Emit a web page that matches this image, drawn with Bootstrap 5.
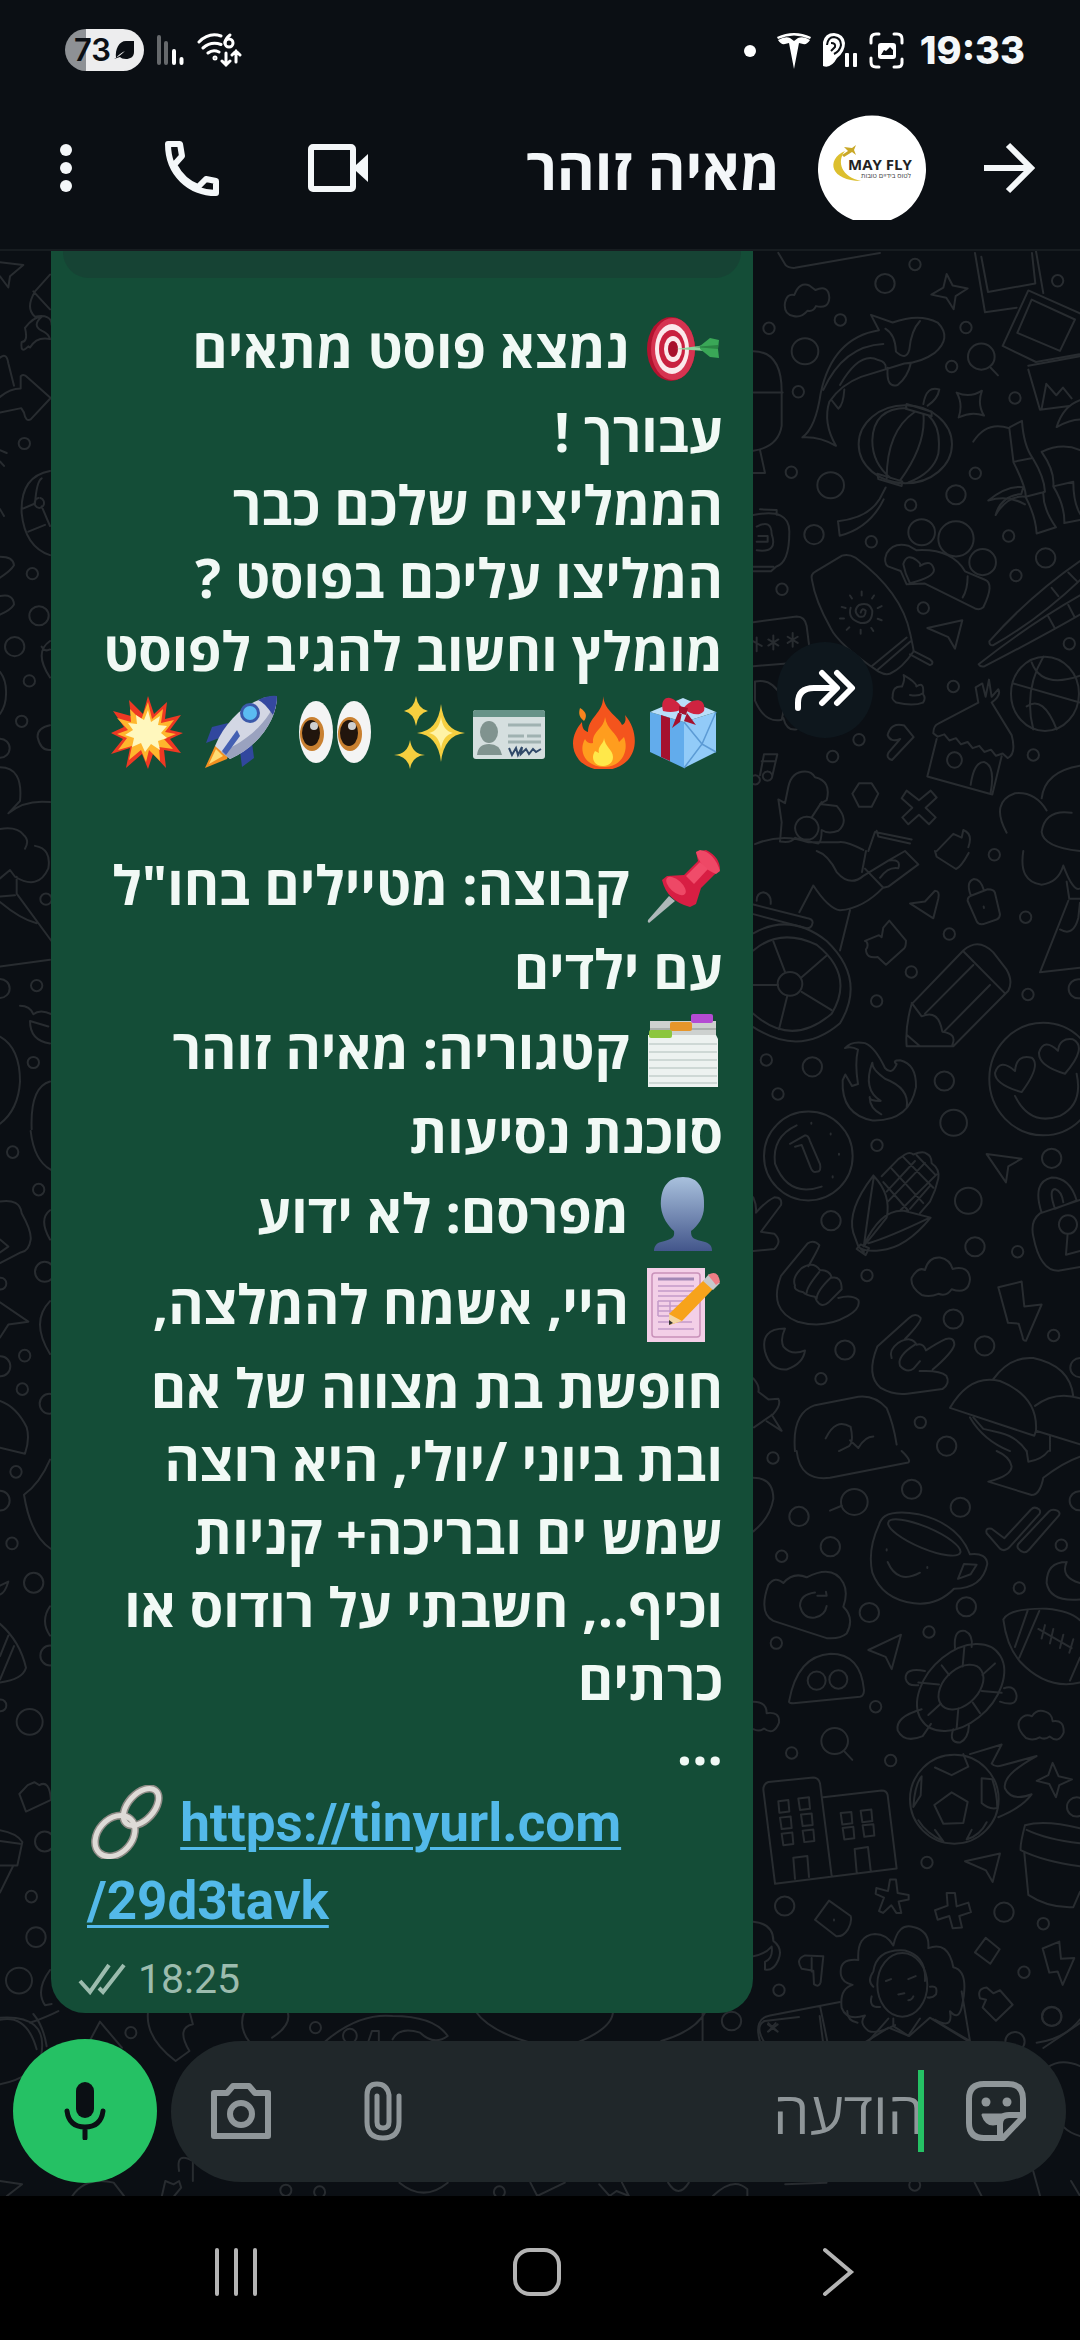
<!DOCTYPE html>
<html lang="he">
<head>
<meta charset="utf-8">
<meta name="viewport" content="width=device-width, initial-scale=1">
<title>מאיה זוהר</title>
<link href="https://cdn.jsdelivr.net/npm/bootstrap@5.3.0/dist/css/bootstrap.min.css" rel="stylesheet">
<style>
body{background:#0b0f14;color:#f4f7f9;font-family:"Open Sans","Noto Sans",sans-serif}
svg{display:block;flex:none}
.sys-bar{height:100px;padding:0 55px 0 65px}
.sys-icons{gap:12px}
.sys-time{font:800 38px/56px Inter,sans-serif}
.batt{width:79px;height:42px;border-radius:21px;background:linear-gradient(90deg,#8e9195 21px,#ededee 21px);color:#0b0f14;font:600 31px/42px Inter,sans-serif;padding-left:9px}
.chat-head{height:151px;border-bottom:2px solid #171c20;padding:0 44px 14px 56px}
.icon-btn{background:none;border:0;padding:0;color:#f4f7f9}
.contact{font-size:58px;font-weight:700;line-height:80px;gap:38px}
.avatar{width:108px;height:108px;margin-right:16px}
.head-actions{gap:89px}
.chat-area{background:#0b0f14}
.doodle{left:0;top:0;width:1080px;height:1946px}
.doodle-lines{fill:none;stroke:#282c30;stroke-linecap:round;stroke-linejoin:round}
.doodle path,.doodle ellipse{vector-effect:non-scaling-stroke;stroke-width:2px}
.msg-row{padding-left:51px;gap:24px}
.bubble{width:702px;background:#144d37;border-radius:0 0 34px 34px;color:#f1f9f5}
.preview-end{height:27px;margin:0 12px;background:#164334;border-radius:0 0 26px 26px}
.msg-body{padding:26px 30px 0 36px;font-size:54px;font-weight:700}
.ln{line-height:73px;white-space:nowrap}
.ln-emoji{padding:7px 0 11px}
.ln-empty{height:63px}
.ln-dots{height:68px;line-height:56px}
.emo{display:inline-block;width:74px;height:74px;margin:-10px 3px;vertical-align:-8px}
.ln-link{line-height:78px;font-family:Roboto,sans-serif;font-size:53px}
.ln-link a{color:#53b9e9;text-decoration-thickness:3px;text-underline-offset:6px}
.msg-meta{padding:14px 27px 9px;gap:12px;color:#9cbcae;font:400 41px/50px Roboto,sans-serif}
.fwd{width:96px;height:96px;border-radius:50%;background:#0e171d;margin-top:391px;border:0;padding:0}
.composer{padding:0 14px 13px 13px;gap:14px}
.mic{width:144px;height:144px;border-radius:50%;background:#25c164;border:0;padding:0}
.pill{min-height:141px;border-radius:71px;background:#20272a;padding:0 40px;color:#8f9699}
.pill .icon-btn{color:#8f9699}
.pill-tools{gap:92px}
.field{margin:0 42px}
.msg-input{background:none;border:0;outline:0;color:#f4f7f9;font-size:58px;height:82px;padding:0;min-width:0;caret-color:#25c164}
.msg-input::placeholder{color:#8f9699;opacity:1}
.caret{width:6px;height:82px;background:#25c164;right:0;top:0}
.nav-keys{height:144px;background:#000;padding:8px 6px 0 0}
.nav-keys .icon-btn{color:#b4b4b4;width:28%}
</style>
<script src="https://cdn.jsdelivr.net/npm/bootstrap@5.3.0/dist/js/bootstrap.bundle.min.js"></script>
</head>
<body>
<div class="d-flex flex-column min-vh-100">

<div class="sys-bar d-flex align-items-center justify-content-between">
  <div class="sys-icons d-flex align-items-center">
    <div class="batt d-flex align-items-center">73<svg width="24" height="22" viewBox="0 0 24 22"><path d="M23 2v11c0 5-4 7-8 7-3 0-5-1-6-2l-6 2c4-2 8-5 11-8-4 2-7 4-9 7-1-9 3-17 10-17z" fill="#0b0f14"/></svg></div>
    <svg width="28" height="32" viewBox="0 0 28 32" stroke-width="4" stroke-linecap="round"><path d="M3 3v26M10 9v20" stroke="#66696c"/><path d="M18 17v12M25.500 25v4" stroke="#fff"/></svg>
    <svg width="46" height="38" viewBox="0 0 46 38" fill="none" stroke="#fff" stroke-width="3" stroke-linecap="round"><path d="M3 11q10-10 22-6M7 17q8-7 18-3.500M12 22q5-4 11-1"/><circle cx="19" cy="27" r="1"/><path d="M34 4q-5 4-5 8"/><circle cx="33" cy="12" r="4"/><path d="M30 22v12m-4-4l4 4 4-4M40 31V20m-4 4l4-4 4 4"/></svg>
  </div>
  <div class="d-flex align-items-center">
    <svg width="176" height="44" viewBox="0 0 176 44" fill="#fff"><circle cx="6" cy="23" r="6"/><path d="M33 9q17-8 34 0l-1 2q-16-7-32 0zM34 12q7-4 12-2l4 3 4-3q6-2 12 2-3 5-7 4l-4-1-5 26-5-26-4 1q-4 1-7-4z"/><path d="M79 14q2-9 11-9 10 1 11 10 0 9-8 15-6 11-14 8z"/><path d="M83 17q1-8 7-8 7 1 7 8-1 6-7 9M87 15q5 0 4 4l-4 4" fill="none" stroke="#0b0f14" stroke-width="2"/><rect x="101" y="25" width="4" height="14" rx="1"/><rect x="109" y="25" width="4" height="14" rx="1"/><path d="M127 15v-4q0-5 5-5h3M150 6h3q5 0 5 5v4M158 31v4q0 4-5 4h-3M135 39h-3q-5 0-5-5v-4" fill="none" stroke="#fff" stroke-width="3" stroke-linecap="round"/><path d="M137 15h12q3 0 3 3v10q0 3-3 3h-12q-3 0-3-3V18q0-3 3-3zm0 12h12v-5l-3-3-4 4-2-1z" fill-rule="evenodd"/></svg>
    <div class="sys-time">19:33</div>
  </div>
</div>

<header class="chat-head d-flex align-items-center justify-content-between" dir="rtl">
  <div class="contact d-flex align-items-center">
    <button class="icon-btn" aria-label="חזרה"><svg width="56" height="56" viewBox="0 0 56 56" fill="none" stroke="currentColor" stroke-width="6"><path d="M4 28h46M28 5l23 23-23 23"/></svg></button>
    <svg class="avatar" viewBox="0 0 108 108"><path d="M35 106a54 54 0 1 1 38 0z" fill="#fff"/><path d="M27 37c-20 9-14 30 16 30-19-4-25-19-16-30z" fill="#dcbf2e"/><path d="M24 41l6-4-4-4 8 1 4-3-2 5 2 5-4-3-8 5z" fill="#c9a827"/><text x="30" y="56" font-family="Open Sans" font-size="15" font-weight="700" fill="#222" direction="ltr">MAY FLY</text><text x="93" y="64" font-family="Open Sans" font-size="7" font-weight="400" fill="#444" direction="rtl">לטוס בידיים טובות</text></svg>
    <span>מאיה זוהר</span>
  </div>
  <div class="head-actions d-flex align-items-center">
    <button class="icon-btn" aria-label="שיחת וידאו"><svg width="60" height="56" viewBox="0 0 60 56"><rect x="3" y="7" width="42" height="42" rx="2" fill="none" stroke="currentColor" stroke-width="6"/><path d="M48 25l12-11v28L48 31z" fill="currentColor"/></svg></button>
    <button class="icon-btn" aria-label="שיחה"><svg width="54" height="56" viewBox="0 0 54 56" fill="none" stroke="currentColor" stroke-width="6" stroke-linejoin="round"><path d="M3 4h12l2 12-8 9Q18 42 33 47l8-8 10 2v12C25 53 3 34 3 4z"/></svg></button>
    <button class="icon-btn" aria-label="עוד"><svg width="20" height="56" viewBox="0 0 20 56" fill="currentColor"><circle cx="10" cy="10" r="6"/><circle cx="10" cy="28" r="6"/><circle cx="10" cy="46" r="6"/></svg></button>
  </div>
</header>

<main class="chat-area position-relative overflow-hidden flex-grow-1 d-flex flex-column justify-content-between">
  <svg class="doodle position-absolute" viewBox="0 250 1080 1946" aria-hidden="true">
    <defs>
      <ellipse id="rs" rx="17" ry="15"/><ellipse id="rm" rx="29" ry="25"/><ellipse id="rl" rx="40" ry="34"/>
      <ellipse id="ls" rx="17" ry="10"/><ellipse id="lm" rx="29" ry="17"/>
      <path id="arrow" d="M0 0l105-20-22 74-20-30z"/>
    </defs>
    <g class="doodle-lines" transform="translate(740 250) scale(.3333 .3827)">
      <use href="#rs" x="525" y="35"/><use href="#rs" x="87" y="202"/><use href="#rs" x="301" y="180"/><use href="#rs" x="175" y="368"/><use href="#rs" x="678" y="200"/><use href="#rs" x="635" y="302"/><use href="#rs" x="825" y="384"/><use href="#rs" x="953" y="78"/><use href="#rs" x="154" y="578"/><use href="#rs" x="512" y="664"/><use href="#rs" x="706" y="581"/><use href="#rs" x="394" y="760"/><use href="#rs" x="806" y="745"/><use href="#rs" x="828" y="848"/><use href="#rs" x="126" y="884"/><use href="#rs" x="550" y="933"/><use href="#rs" x="640" y="1138"/><use href="#rs" x="988" y="1026"/><use href="#rs" x="357" y="1277"/><use href="#rs" x="278" y="1321"/><use href="#rs" x="880" y="1317"/>
      <use href="#rm" x="435" y="85"/><use href="#rm" x="648" y="637"/><use href="#rm" x="222" y="741"/><use href="#rm" x="917" y="802"/><use href="#rl" x="195" y="262"/><use href="#rl" x="272" y="612"/><use href="#rl" x="545" y="735"/><ellipse cx="648" cy="752" rx="53" ry="46"/><use href="#rl" x="728" y="813"/><use href="#rl" x="724" y="276"/><path d="M752 305l22 20"/>
      <path d="M115 5l22 32q8 8 28 7L420 5M160 170q-30-5-25-35 6-25 28-20 15-35 45-25l18 12q40-15 42 20-2 30-40 22-8 15-25 12-20 20-43 14zM620 60l18 30 45 8-36 20-6 34-22-30-45-8 36-18zM650 370q40 15 76-5-15 35 6 65-38-12-76 5 14-35-6-65z"/>
      <path d="M705 5l30 155 95-12M724 15l20 92 142-22-10-80M888 0l22 110M865 103l155 60M865 103l-77 145 100 42 130-20M875 127l130 52-45 82-128-47zM865 300l155-25M865 310l35 105 88-10M905 412l14-65 30 30 20-20 26 28M1020 390q-50 15-70 70 40-20 70-20"/>
      <path d="M187 487q40-25 55-115 35-145 175-165l-24-40 65 20q80-25 135 0 45 40-10 80-40 25-90 27l-130 35q-60 20-95 65-20 55 20 115-50-25-101-22zM430 243q-120 5-180 120M436 203q30 15 32 60 30 25 40-5 5-50 32-75M443 305q-5 55 30 45 30-20 40-58M300 350q60-90 115-65 25 5 22 22M275 390l20 22q15-10 18-50"/>
      <ellipse cx="496" cy="505" rx="140" ry="102"/><path d="M500 410q-100 0-103 85 0 60 55 98M525 420q-85 50-85 175M550 425q10 80-70 175M565 430q40 30 30 100-15 50-90 75M500 400l75 20v12l-78-20zM550 400q10-50 48-38-5 25-35 42M412 582l75 20-2 12-70-18zM437 618l-18 30q-35 50-125 58l5 38q90-20 132-95"/>
      <path d="M700 498q40-55 108-35l12 85M810 460l36-16q5 65 32 97l-58 10q40 70 37 92 30 50 33 95l58-16q-40-50-38-92M878 541q35 50 37 88l-58 13q-55-5-90 48 15-50 77-55l6-18q-50-5-105 35 60-15 110 10M905 525q60-25 115-5M905 525q40 50 35 90l60-12M940 615q35 50 33 96l47-8M1000 603q0 60 25 90"/>
      <path d="M40 262q85 0 85 105v90q-10 55-85 65M40 370h88M60 520l15 60H40M40 690q110-20 108 45 0 80-40 90l-15 12H40M40 825h60M60 675l50 2v12M50 720q45-20 45 20 20 50-45 42M55 745h28v15H50"/>
      <path d="M216 860q-5-15 10-22l80-42q20-5 40 5 140 90 165 200 10 40 10 45-35 45-70 58-15 5-35-5-120-70-145-115-45-70-55-124zM395 1085l105-75M412 1095l100-75M520 1045l50 22q15 10 0 15l-60-28"/>
      <path d="M362 945q5-15 15-5 0 20-20 15-20-15 0-30 30-10 40 15 0 35-35 32-40-10-30-40M365 890v10M330 900l6 8M305 930l12 3M300 960h12M320 990l8-7M362 1000v-10M400 993l-6-8M425 965l-12-4M425 928l-12 5M402 900l-6 8"/>
      <path d="M440 790q20-30 65-20l25 12q105-5 145 55l60 22q30 10-5 72-10 8-25 3l-150-65-55 2-18-35-38-12q-15-10-4-34zM510 868q-15-25-20-50 10-30 40-10 15 10 10 15 35-20 42 10 0 20-72 35zM683 850q0 35-15 55"/>
      <use href="#arrow" x="562" y="985"/><path d="M1020 810Q870 900 748 1020q0 12 12 10Q900 960 1020 860M935 880l20 22M985 840l25 22M1020 900Q860 980 716 1080q5 8 18 5Q900 1010 1020 950M985 925l18 30M925 955l18 28"/>
      <ellipse cx="915" cy="1157" rx="102" ry="97"/><path d="M820 1130l200 50M875 1075q30 70 145 35M910 1060q-60 90-30 190M860 1190q50-30 90 60"/>
      <path d="M40 970l130-15q25 0 30 25l8 55q0 35-30 40L40 1085M100 1005v36M85 1015l30 16M115 1015l-30 16M158 998v36M143 1008l30 16M173 1008l-30 16M50 1010v36M40 1020l25 12M45 1125q50-10 80 40 10 30 0 60-50 10-80-50zM125 1150q130-40 240-20 20 40-20 55-40 10-50-2M130 1220q10 35 40 30M200 1250l35-45 30 45z"/>
      <path d="M458 1165q0-30 28-27 10-20 5-30 40 20 38 30 25-15 20 20 10 10 0 22-30 10-80 0-15-10-11-15zM510 1160q25 5 40-5M443 1265q10-35 50-25l28 30-65 60q-20-5-10-20l35-35q-30 10-38-10z"/>
      <path d="M580 1260q0-20 15-25l120-55-8-40 20-10 10 35 10-45 8 45 20-20q10 15-20 35l60 85q15 50-12 60l-15-12-20 6-15-16-20 6-15-16-20 6-15-16-20 6-15-16-20 6-15-16-20 6zM590 1275l-28 98 195 47 28-100M692 1395q10-60 40-60 35 10 20 80M643 1310a22 20 0 1 0 1 0"/>
      <path d="M60 1370l12-55h40l-16 60M65 1333h40M45 1370a14 12 0 1 0 1 0M82 1360a14 12 0 1 0 1 0M337 1418l20-27h38l20 27-20 34h-38zM500 1410l37 25 35-25 18 18-33 27 30 25-20 18-30-25-32 25-18-18 30-25-32-25zM145 1400q10-40 50-40 20 0 30 15 50 10 35 60l-20 10 50 5q40 40 5 65-30 10-50-2 0 30-10 35-60-10-70-15-10 15-45 10l5-50-10-60 20 10zM200 1478a35 30 0 1 0 1 0M215 1480l30-40M800 1520q-50-80 25-103 60-5 95 45M905 1430q10-70 115-85M1020 1568q-110-10-115-50 10-60 90-50M45 1550q80-30 160-5h90q20-5 75 20M385 1568l20-50 110 20M410 1515l5 15 95 18M590 1568l50-45 25 10 5-20q30 10 15 45"/>
    </g>
    <g class="doodle-lines" transform="translate(740 850) scale(.3333 .3827)">
      <use href="#rs" x="763" y="10"/><use href="#rs" x="857" y="173"/><use href="#rs" x="628" y="217"/><use href="#rs" x="514" y="316"/><use href="#rs" x="410" y="392"/><use href="#rs" x="864" y="375"/><use href="#rs" x="79" y="546"/><use href="#rs" x="114" y="635"/><use href="#rs" x="411" y="769"/><use href="#rs" x="833" y="1047"/><use href="#rs" x="381" y="1109"/><use href="#rs" x="941" y="1266"/><use href="#rs" x="243" y="1379"/><use href="#rs" x="541" y="1493"/>
      <use href="#rm" x="217" y="564"/><use href="#rm" x="613" y="601"/><use href="#rm" x="935" y="803"/><use href="#rm" x="273" y="966"/><use href="#rm" x="705" y="1034"/><use href="#rm" x="640" y="1223"/><use href="#rm" x="315" y="1304"/><use href="#rm" x="734" y="1293"/><use href="#rm" x="620" y="1555"/><use href="#rl" x="641" y="710"/><use href="#rl" x="685" y="914"/><use href="#rm" x="1015" y="360"/><use href="#rm" x="1020" y="1350"/>
      <path d="M230 0q35 10 60 55 40 40 80 10l75-40 50-25 40 35-90 58-15 3-55-50M378 0l-12 55M445 25q40-5 30 20-30-5-55 25M430 95q-60 55-130 60-35-5-80-65l-42 70M330 155l-30 105M40 165l160 37q15 0 18-15 0-10-18-12L40 140M50 130q0-20 20-22 25 5 22 30"/>
      <path d="M40 215q110-55 220 20 120 100 40 215-120 90-260 10M40 260q80-60 190-15 115 80 45 180-120 90-235 0"/><ellipse cx="150" cy="347" rx="37" ry="31"/><path d="M135 316l-35-80M185 330l75-57M185 368l90 48M142 378l-25 88M40 350h74"/>
      <path d="M585 0l5 15 58 32q15-5 38-42M510 137l45-5 30-28q15 0 10 20l-15 52zM375 235l42-15 8 5 5-25 18-18 50 52q0 15-5 20l-55 43-25-20q-35 5-35-20 10-10 0-22zM683 130q0-10 10-13l50-17q20 0 22 10l15 55q0 10-10 14l-40 12q-15 2-20-8zM692 115q-15-35 10-42 20 0 30 30M731 145l1 4"/>
      <path d="M515 400l155-140q45-35 90 5l40 45q20 30 5 55L640 510H500q-5-50 15-110zM670 262l125 110M700 298L555 425M750 350L612 472M515 397l30 35q50-20 62 40 45 5 30 35M500 480l40 30"/>
      <path d="M850 0q-15 80 55 88 50-5 65-50 30 70 50 60M980 80l8 45h32M985 130l-85 187 120-12M960 205q40 20 55-30l5-40"/>
      <path d="M315 515q20-20 60-13 30 10 60 65 20 20 35-10-15-10 10-10 50 10 48 70-20 90-130 87-95-15-90-105l8-15 20 30 18-5q-10-55 0-90-20-10-39-4zM500 670q10-50-65-75-40-25-38-42-30 70 25 100-35 0-33-10 0 30 35 45"/>
      <ellipse cx="910" cy="596" rx="162" ry="147"/><path d="M845 630q-80-20-80-50 15-40 60-5 5-45 50-35 30 20-30 90zM975 582q-80-20-78-55 15-40 57-5 5-35 45-30 45 20-24 90zM825 640q45 80 135 52 70-30 50-110"/>
      <ellipse cx="205" cy="797" rx="133" ry="116"/><path d="M170 717q-75 30-65 100 40 90 140 60M150 765l45-22q10 0 15 15l30 60q5 20-10 20-12 5-20-15l-25-55-20 5M214 710v3M272 738v3M297 791v3M278 850v3"/>
      <path d="M425 850l50-45 20-12q15-8 25 0 30-10 40-2 15 5 15 25 25 15 20 40l-10 30-15 30-30 30M400 848q55 50 40 110-45 50-70 75M400 848q-80 90-60 150l15 35 17 15M372 1030q20-130 30-180M372 1030q50-95 120-90l80 18q-75 80-150 85-40 5-60-5M385 1025q60-15 180-65M350 1040l12-12 25 10-10 18zM430 865l75 75M455 830l95 90M490 800l90 80M530 795l55 50M445 915l110-100M480 940l110-95M440 890l85-80M510 935l60-60"/>
      <path d="M740 792l105 12-40 20-7 42zM545 1160q-35-20-30-45 20-30 40-20 10-35 45-33 30 5 38 30 50-10 52 28-5 40-55 25-15 20-40 12-25 10-50 3zM775 1140l70-15 8 65 52-5-47 95q-10 0-10-10l-12-35-32-2z"/>
      <path d="M905 945q-30-80 30-92 55 0 75 60l-65 22q-20-50 0-52 20 5 25 35M1020 912l-120 35q-30 20-20 60 20 90 75 90l65-10M985 1000a27 24 0 1 0-2 0l-5 55 42-10"/>
      <path d="M205 1085q30-45 33-55-15-15-35-5l-80 85q-40 90 50 120 80 20 150-15 40-20 32-42-20-15-60-5M165 1135q-10-20 20-45 35-20 55 5 30 0 35 20 30-5 30 30l-40 35q-20 15-35-5l-5-10q-30-5-35-12-30-5-25-18zM200 1155q0-15 38-55M230 1170q0-20 42-55"/>
      <path d="M495 1275q50-45 47-55-15-15-35 0l-95 75q-35 75 10 108 40 20 80 15l105-12q25-15 12-35-20-15-80-12M455 1325q-10-20 20-40 40-20 55 5 20-5 28 15 35-20 60-30 25-5 25 15-5 20-65 65M480 1345q-10-25 45-55M480 1345q20 20 40 8l20-20"/>
      <path d="M135 1248q-75 0-60 60 15 50 65 47 50-15 55-50-40 15-65-10-10-20 5-47zM40 905q10 20 8 40 30-30 55-40 25 0 20 20l-60 70 40 5q25 20 0 40l-63 5M40 1378q20 20 15 35l30 20 30-2q10 15-15 40l-58 35M80 1490l45 25-30-42M165 1568q-10-100 60-120l130-22q50-5 85 30 20 40 30 95M257 1535q30-55 75-30 10 40-5 50l-30 13M330 1540l25 20q20-30 45-30M630 1455q60-90 150-70 115 40 108 130l-5 13zM760 1380q50-60 120-55 110 20 120 100M885 1450q60-40 135-20M690 1480q40 60 120 88M700 1480l30 30 50 10q50 10 80 48M888 1515l132 35M930 1530v38"/>
    </g>
    <g class="doodle-lines" transform="translate(740 1450) scale(.3333 .3827)">
      <use href="#rs" x="99" y="18"/><use href="#rs" x="125" y="275"/><use href="#rs" x="109" y="502"/><use href="#rs" x="964" y="246"/><use href="#rs" x="838" y="358"/><use href="#rs" x="567" y="473"/><use href="#rs" x="407" y="668"/><use href="#rs" x="155" y="789"/><use href="#rs" x="452" y="809"/><use href="#rs" x="561" y="1075"/><use href="#rs" x="910" y="1235"/><use href="#rs" x="852" y="1362"/><use href="#rs" x="117" y="1409"/>
      <use href="#rm" x="515" y="100"/><use href="#rm" x="661" y="147"/><use href="#rm" x="177" y="171"/><use href="#rm" x="271" y="250"/><use href="#rm" x="388" y="422"/><use href="#rm" x="679" y="407"/><use href="#rm" x="134" y="1189"/><use href="#rm" x="792" y="1205"/><use href="#rm" x="935" y="1477"/><use href="#rm" x="825" y="1543"/><use href="#rm" x="1010" y="930"/><use href="#rm" x="1018" y="130"/><use href="#rl" x="343" y="133"/><path d="M305 143l-35 13"/><use href="#rl" x="284" y="758"/><path d="M313 785l24 22"/>
      <path d="M170 0q10 80 100 70l235-40q10-5-20-30M40 70q60 0 60 55-10 50-60 85M770 0q40 15 45 40 0 25-70 40l130 35q25 0 35-45 60-40 110-55M860 0l5 28q40-5 60-28"/>
      <path d="M435 170q30-15 100-5 120 25 155 105 50-5 52 25-15 65-100 65-50 45-120 38-95-10-125-80-15-60 20-125 5-15 18-23z"/><ellipse cx="553" cy="226" rx="115" ry="28" transform="rotate(20 553 226)"/><path d="M443 290q30 60 97 28M672 295l38 2-18 25-38 12zM440 257v3M562 303v3"/>
      <path d="M740 215q-5-15 15-12l38 25 80-75q10-10 25 0 5 5 0 12l-88 85q-15 15-30 5zM835 255q-5-5 0-12l92-85q10-8 25-2 10 5 5 12l-90 90q-15 15-32-3zM980 290q-60 0-60 55 10 50 100 43M980 290q-20 40 40 55"/>
      <path d="M85 350q20-25 45-5 30-30 70-15 80-35 110 15 15 25 0 62 35 30 10 70-20 15-60 12l-160-45q-45-20-15-94zM225 370q-45 5-45 35 10 35 45 30 30-5 35-30M232 378h28l-2-10M385 520l98-40-28 90-18-32zM147 655q25-120 125-125 90 0 100 95 0 15-12 17l-200 17q-12 0-13-4z"/><ellipse cx="230" cy="600" rx="27" ry="24"/><ellipse cx="295" cy="597" rx="27" ry="24"/>
      <path d="M790 440q20-30 130-28 70 5 100 30M790 440q10 70 50 110 80 75 180 55M825 512l38-95M838 540l60-122M990 600l30-60M895 465l100 50M915 455l-10 35M940 465l-10 38M970 480l-10 35M1000 492l-12 35"/>
      <ellipse cx="662" cy="618" rx="145" ry="95" transform="rotate(-35 662 618)"/><ellipse cx="663" cy="617" rx="75" ry="48" transform="rotate(-35 663 617)"/><path d="M645 515q-5-50 30-45 25 10 20 42M555 575q-60-10-58 20 5 20 38 17M545 675q-80 20-72 55 20 35 75 15l25-32M640 727q-15 35 20 35 25-10 27-45M780 655q50 15 50-15-5-30-38-20M605 560l22 25M673 513l-5 50M765 555l-38 30M785 632l-60-5M720 685l-22-28M650 725l5-52M565 690l38-30M535 605l62 5"/>
      <path d="M858 750q-30-25-20-45 15-20 38-12 15-20 40-12 20 5 22 25 35-5 33 30-15 30-42 10-15 10-30 2-20 10-41 2zM40 655q40 0 40 30 40-5 37 25-15 35-45 15-15 10-32 2"/>
      <ellipse cx="643" cy="910" rx="133" ry="116"/><path d="M583 925l52-33 48 25-13 55-60 2zM585 827l50 20 50-22-15-33M545 850q-20 20-25 80l22-30zM725 920v-65l32 3q15 40 15 75-25 5-47-13zM535 965q25 35 75 55l-25-30M740 970q-20 35-60 45l15-25M690 792l95-25-30 50q10 10 30 5l105-25q-105 50-95 85 20 35 80 15-30 35-100 60M938 815l18 35 40 8-38 15-10 32-20-35-38-8 35-15z"/>
      <path d="M105 1130L70 885q0-15 15-20l135-12q15 0 20 15l35 242M250 905l175-18q15 0 18 12l27 192-365 40M165 1118l-5-55 42-5 5 55M350 1100l-6-60 40-5 8 60M115 915l30-3 3 30-30 3zM175 908l32-3 3 30-30 3zM120 958l32-3 3 30-30 3zM183 950l32-3 3 30-30 3zM125 1000l32-3 3 30-30 3zM188 992l32-3 3 30-30 3zM302 946l32-3 3 30-30 3zM362 940l32-3 3 30-30 3zM308 985l32-3 3 30-30 3zM368 978l32-3 3 30-30 3z"/>
      <path d="M855 978q60-15 165 8M855 978q-15 50-13 65 70 30 178 42M860 990q60 25 160 35M853 1050l12 110q60 35 135 32l20-40"/><use href="#arrow" x="675" y="1072"/>
      <path d="M450 1120h18l5 35 33 5v12l-30 5 8 30h-15l-15-20-25 20-12-5 15-35-25-10 2-15 35 8zM620 1155h25l5 35 35-10 8 25-35 10 8 30-28 2-10-32-35 10-8-25 38-12zM225 1225l42-50 65 40q5 15-8 35-15 20-35 18zM282 1224v3M705 1310l32-38 42 30-28 38zM720 1430q-10-25 20-28l20 15 20-8 38 38-50 42-40-35 10-20zM908 1300l50-18 5 45 40-2-35 70-15-35-25 3zM250 1320l-55-2q-30 10-10 35l35 5 2 35q15 10 20-5zM215 1325v35M40 1230q60 5 60 50 30 20 15 50-15 30-40 25v-20q25-10 20-40-20 20-55 25"/>
      <path d="M355 1330q-5-65 50-68 35 0 55 30 15-60 60-48 50 10 45 55 60-20 75 50 50 10 25 105-10 35-35 10 10 50-45 22M355 1330q-60-5-52 40 5 20 35 25-40 10-33 60 15 35 70 20-20 20 10 40 25 10 80-15"/><ellipse cx="487" cy="1395" rx="75" ry="83"/><path d="M400 1400q-20-15 0-40 10-60 95-55 65 15 60 80M395 1425q-10 30 25 28M570 1400q25-5 18 20-10 10-25 8M438 1385l15-5M505 1380l22-8M475 1420l18-3M505 1435q10 0 15-10M460 1483v20l45 25 35-45M385 1543l60-60M580 1485l110 57-25-130M60 1543q-20-60 30-68l210-35M240 1450l22 93M85 1495l22 18M107 1495l-20 20M910 1560l110-65"/>
    </g>
    <g class="doodle-lines" transform="translate(0 250) scale(.3333 .5612)">
      <path d="M0 20l70 5-40 20-5 20-25-20M150 42l-45 30q-30 30 0 45 50-5 50 15M100 72l50 32M85 170q-25 15-20-8 20 0 10-25 25-20 50-20-30 15 0 25 20 5 25 15-40-5-60 15zM0 190q20-10 25 10l17 40M0 260q30-15 62-15v-22q10-5 20 2l70 37-60 38q-15 5-20-12l-8-8-64 8M150 392q-90 10-85 75 10 60 85 75M65 460l40-10q5-40 20-45M115 440a14 9 0 1 0 6 0M125 455l25 35M85 500l50-12M0 545q40 0 42 15-10 10-42 22M0 615q40-5 42 15-10 10-42 18M0 750q20 15 18 40 0 20-18 35M150 695q-50 20 0 65M125 705q10 10 25 5M150 845q-40 5-37 22 10 25 40 22M0 920q70 0 60 60l-35 22q50-25 125-20M0 1030q50-5 70 10 20 10 5 25M105 1060q50 5 40 40-30 40-100 15l-15-12-30 15M50 1115v30l105 85M0 1150l45-2M0 1160q60 30 110 38M0 1275l150-12M60 1345q30 0 40 15 20-10 55 0M150 1412q-60-5-60-40l55 10M0 1400q60 20 60 80-5 50-60 75M150 1480q-60 10-55 85M0 355l20 5M0 375l12 8M0 460l12 12"/>
      <use href="#ls" x="73" y="343"/><use href="#ls" x="97" y="575"/><use href="#lm" x="117" y="650"/><use href="#lm" x="44" y="705"/><use href="#ls" x="88" y="766"/><use href="#ls" x="65" y="838"/><use href="#lm" x="0" y="886"/><use href="#ls" x="138" y="1155"/><use href="#ls" x="110" y="1309"/><use href="#lm" x="0" y="1314"/><use href="#ls" x="100" y="1446"/>
    </g>
    <g class="doodle-lines" transform="translate(0 1130) scale(.3333 .5867)">
      <path d="M92 0q10 50 60 66M0 120q60-5 65 20 30 30 27 45-5 20-30 22l-62 18M0 185l25 12-25 10M0 292l85 33-60 5-25 22M0 460q50 10 80 45 10 20-5 45L0 540M150 560q-30 40-78 60 20 70 80 92M0 775l25-7q-10 20-25 22M0 840q60 30 78 75-10 20-78 25M25 860L0 895M42 878L0 935M150 290q-60 35 0 90M150 135q-35 15 0 50M150 810q-30 25 0 50M58 1130l25-15 20-5 15 5q30-10 35 25l-75 20zM0 1192q50 5 67 20l-15 40H0M0 1210l60 5M40 1252L0 1298M150 1430q-45 35-15 60l20-2M90 1520q50-10 85-20M0 1515q80-10 110 50M100 1505q30 20 40 55"/>
      <use href="#ls" x="38" y="36"/><use href="#ls" x="116" y="100"/><use href="#lm" x="134" y="240"/><use href="#ls" x="2" y="260"/><use href="#ls" x="74" y="383"/><use href="#lm" x="2" y="401"/><use href="#ls" x="67" y="440"/><use href="#lm" x="148" y="465"/><use href="#ls" x="48" y="581"/><use href="#lm" x="0" y="630"/><use href="#ls" x="36" y="703"/><use href="#lm" x="101" y="770"/><use href="#lm" x="150" y="894"/><ellipse cx="89" cy="1007" rx="39" ry="22"/><use href="#ls" x="2" y="979"/><use href="#lm" x="134" y="1211"/><use href="#ls" x="94" y="1305"/><use href="#lm" x="108" y="1374"/><ellipse cx="57" cy="1448" rx="39" ry="22"/>
    </g>
    <g class="doodle-lines" transform="translate(0 2010) scale(.6888 .3333)">
      <path d="M0 20q70-10 60 110-10 70-60 90M125 110l20-78 32 78M215 0q-5 80 40 150l20-30q-20-70 5-80l-5-40M355 0q-10 50 8 95M395 80q30-40 22-80M470 95q50-90 100-80 60 0 80 60-20 30-40-10-30-20-40 20M535 90l5-30h10v35M690 0q20 60 80 95M890 0q0 50-50 93M960 90q50-30 65-90M1020 95V0M1110 95q-15-50 0-65l50-12M1195 95l-5-80M1115 40l14 22M1129 40l-14 22M1255 95l35-45 30 25 30-55 55 70M1230 0q0 30 15 35M1505 95q40-10 63-70M1520 170q20-30 48-5M1530 300q10 60 38 75M0 510l32 10-22 35M105 555q20-60 60-40l15 40M235 555l5-45 12 10 8-10 3 20-10 25M260 480q-5-60 20-30v60M580 515q35 60 70 0M770 515l10 40 40-40M870 520l15 35 10-15 18 15-10-40M970 515q15 50 30 0M1035 555q30-60 50-20v20M1140 520l60-5M1415 515l10 40M1500 480l10 75M1555 510l13 45"/>
      <ellipse cx="190" cy="65" rx="8" ry="17"/><ellipse cx="458" cy="50" rx="8" ry="17"/><ellipse cx="1062" cy="30" rx="14" ry="28"/><ellipse cx="1527" cy="17" rx="14" ry="28"/><ellipse cx="415" cy="538" rx="8" ry="17"/><ellipse cx="464" cy="543" rx="8" ry="17"/><ellipse cx="725" cy="543" rx="8" ry="17"/><ellipse cx="1328" cy="522" rx="8" ry="17"/><ellipse cx="508" cy="75" rx="10" ry="22"/>
    </g>
  </svg>

  <div class="msg-row position-relative d-flex align-items-start">
    <article class="bubble">
      <div class="preview-end"></div>
      <div class="msg-body" dir="rtl">
        <div class="ln ln-emoji"><svg class="emo" viewBox="0 0 74 74"><ellipse cx="25" cy="37" rx="24" ry="32" fill="#b3122f"/><ellipse cx="27" cy="37" rx="22" ry="31" fill="#d63350"/><ellipse cx="26" cy="37" rx="17" ry="25" fill="#fbe9ec"/><ellipse cx="26" cy="37" rx="13" ry="19" fill="#c9203f"/><ellipse cx="27" cy="37" rx="9" ry="13" fill="#fbe9ec"/><ellipse cx="27" cy="37" rx="5" ry="8" fill="#a80f2c"/><path d="M30 37l30-4v6z" fill="#8ed39c"/><path d="M54 34l10-8 9 2-1 9 1 9-9-1-10-8z" fill="#3aa757"/><path d="M48 35l24-2v4z" fill="#2a8444"/></svg> נמצא פוסט מתאים</div>
        <div class="ln">עבורך !</div>
        <div class="ln">הממליצים שלכם כבר</div>
        <div class="ln">המליצו עליכם בפוסט ?</div>
        <div class="ln">מומלץ וחשוב להגיב לפוסט</div>
        <div class="ln ln-emoji"><svg class="emo" viewBox="0 0 74 74"><path d="M4 17l34 10v46L4 57z" fill="#62acec"/><path d="M38 27l32-10v40L38 73z" fill="#92cbf8"/><path d="M4 17L37 3l33 14-32 10z" fill="#b9def9"/><path d="M15 20l9 3v43l-9-4z" fill="#a5122e"/><path d="M38 73l18-24 14 8M38 27l18 22 14-32" fill="none" stroke="#5c9bd5" stroke-width="1.500"/><path d="M37 14C25-4 13 2 17 16c8 2 13 1 20-2 8-12 24-12 21 2-5 6-13 3-21-2z" fill="#cf2440"/><path d="M33 11l9 2-2 7-7-2zM32 18l-6 15 8-6 2-9zM41 18l9 12-12-4z" fill="#a5122e"/></svg><svg class="emo" viewBox="0 0 74 74"><path d="M37 1c2 16 16 21 19 29 4-2 4-6 3-10 12 14 13 34 3 45-12 13-36 14-49 0C2 51 8 36 16 27c0 6 2 9 6 10 0-15 16-19 15-36z" fill="#f4541d"/><path d="M39 22c2 13 12 16 14 25l5-5c5 13-1 29-19 30-20 0-27-16-20-28 2 4 5 5 8 4-1-12 11-14 12-26z" fill="#ff9d1e"/><path d="M38 43c1 9 9 12 9 19 0 6-5 9-10 9-8 0-13-7-8-15l4 2c-2-7 5-9 5-15z" fill="#ffe84a"/><path d="M14 13c7 4 7 9 4 13-4-3-6-7-4-13z" fill="#f8841e"/></svg> <svg class="emo" viewBox="0 0 74 74"><rect x="1" y="15" width="72" height="49" rx="3" fill="#d5dfdf"/><path d="M1 22v-4q0-3 3-3h66q3 0 3 3v4z" fill="#679388"/><ellipse cx="17" cy="37" rx="9" ry="11" fill="#80938f"/><path d="M5 60q1-11 12-11t13 11z" fill="#80938f"/><path d="M36 30h33M36 41h16M55 41h14M36 47h33" stroke="#a0b2b1" stroke-width="3"/><path d="M37 53l3 7 4-7 2 7 4-8-1 7 5-5 3 5 4-5 3 3 5-3" fill="none" stroke="#304969" stroke-width="2"/></svg><svg class="emo" viewBox="0 0 74 74"><path d="M49 9q3 27 24 29-21 2-24 29-3-27-24-29 21-2 24-29zM24 1q2 13 12 15-10 2-12 15-2-13-12-15 10-2 12-15zM18 45q2 14 15 15-13 1-15 14Q16 61 2 60q14-1 16-15z" fill="#f5cf3f"/><path d="M49 22q2 14 12 16-10 2-12 16-2-14-12-16 10-2 12-16z" fill="#fff3a6"/></svg> <svg class="emo" viewBox="0 0 74 74"><ellipse cx="18" cy="37" rx="17" ry="31" fill="#f4f4f4"/><ellipse cx="56" cy="37" rx="17" ry="31" fill="#f4f4f4"/><ellipse cx="14" cy="39" rx="12" ry="17" fill="#c98030"/><ellipse cx="52" cy="39" rx="12" ry="17" fill="#c98030"/><ellipse cx="13" cy="38" rx="9" ry="13" fill="#21150d"/><ellipse cx="51" cy="38" rx="9" ry="13" fill="#21150d"/><circle cx="16" cy="31" r="4" fill="#cfcfcf"/><circle cx="54" cy="31" r="4" fill="#cfcfcf"/></svg> <svg class="emo" viewBox="0 0 74 74"><path d="M24 28L8 32 2 48l16-6zM48 48l2 15-12 9-2-16z" fill="#31479e"/><path d="M11 51L1 73l22-9 4-12z" fill="#f39121"/><path d="M12 54L5 69l14-8z" fill="#ffdc73"/><path d="M73 1C51 1 24 20 11 51l15 13C57 50 73 23 73 1z" fill="#d3d7e4"/><path d="M73 1C68 22 48 44 17 57l9 7C57 50 73 23 73 1z" fill="#9aa2bf"/><path d="M73 1Q65 0 54 5q6 2 15 15 4-10 4-19z" fill="#35489f"/><circle cx="46" cy="18" r="10" fill="#3b59a9"/><circle cx="46" cy="18" r="7" fill="#5bbcf1"/><path d="M33 35L18 56l4 4 14-19z" fill="#4460b3"/></svg> <svg class="emo" viewBox="0 0 74 74"><path d="M38 1l6 18 13-12-2 17 16-4-11 15 13 3-13 6 11 14-17-3 2 18-13-14-5 15-6-15-16 14 4-20-19 6 12-15-12-6 13-6L3 16l18 5-2-16 14 14z" fill="#ee3823"/><path d="M38 7l4 17 11-10-2 14 13-3-9 12 11 2-12 5 9 10-14-2 1 14-11-11-3 12-5-12-12 10 3-14-14 4 9-12-10-4 11-4-11-12 14 4-1-13 11 11z" fill="#ffb62d"/><path d="M38 15l3 12 9-6-2 9 9 1-6 7 6 5-9 3 2 9-9-6-6 8-4-9-9 4 2-9-9-3 8-5-5-7 9 1-1-9 8 5z" fill="#fff7bd"/></svg></div>
        <div class="ln-empty"></div>
        <div class="ln ln-emoji"><svg class="emo" viewBox="0 0 74 74"><path d="M23 47l6 5L3 74q-2-1-1-3z" fill="#aeb8b9"/><path d="M50 3l10-2q14 7 14 20l-6 5-13 13-5 16-6 3Q21 52 16 31l5-4 17-1 14-14z" fill="#d81e43"/><path d="M50 3q4 16 20 22l4-3Q68 3 54 1z" fill="#ee4866"/><path d="M40 27l14-14 8 7-14 15z" fill="#f04c6a"/><ellipse cx="30" cy="37" rx="12" ry="6" transform="rotate(42 30 37)" fill="#ee4866"/></svg> קבוצה: מטיילים בחו"ל</div>
        <div class="ln">עם ילדים</div>
        <div class="ln ln-emoji"><svg class="emo" viewBox="0 0 74 74"><path d="M4 8h66v15H4z" fill="#cdd1cf"/><rect x="45" y="1" width="22" height="9" rx="2" fill="#b44bd3"/><path d="M4 16h66" stroke="#aab0ad" stroke-width="2"/><rect x="24" y="9" width="22" height="9" rx="2" fill="#e6962a"/><path d="M2 22h68l2 4v48H2z" fill="#edf2f0"/><rect x="3" y="17" width="23" height="8" rx="2" fill="#8cc63e"/><path d="M3 31h68M3 39h68M3 47h68M3 55h68M3 63h68M3 70h68" stroke="#c4cfcc" stroke-width="1.500"/></svg> קטגוריה: מאיה זוהר</div>
        <div class="ln">סוכנת נסיעות</div>
        <div class="ln ln-emoji"><svg class="emo" viewBox="0 0 74 74"><defs><linearGradient id="bust" x2="0" y2="1"><stop stop-color="#a9c1dd"/><stop offset="1" stop-color="#43568b"/></linearGradient></defs><path d="M37 0c16 0 22 12 21 30 0 10-6 19-13 24 0 8 3 8 14 11 6 2 7 5 7 9H8c0-4 2-8 7-9 11-3 14-4 13-11-6-5-12-14-13-24C14 12 21 0 37 0z" fill="url(#bust)"/></svg> מפרסם: לא ידוע</div>
        <div class="ln ln-emoji"><svg class="emo" viewBox="0 0 74 74"><path d="M1 0h58v74H1z" fill="#f3cfe7"/><rect x="6" y="5" width="48" height="64" rx="3" fill="none" stroke="#c991b9" stroke-width="1.500"/><path d="M12 11h36" stroke="#a287b5" stroke-width="3"/><path d="M12 18h36M12 23h36M12 28h30M12 33h26M12 38h20M12 43h18M12 48h16M12 54h34M12 61h36M12 33v15M24 33v15" stroke="#c39bc9" stroke-width="1.500"/><path d="M23 46L58 12l9 9-31 32-13 4z" fill="#f7a31b"/><path d="M23 46l13 7-13 4z" fill="#f3d6a4"/><path d="M57 13l6-7 11 9-7 7z" fill="#c6c9cc"/><path d="M62 7q10-6 12 7l-4 3z" fill="#ef7e86"/><path d="M23 52l4 3-4 2z" fill="#333"/></svg> היי, אשמח להמלצה,</div>
        <div class="ln">חופשת בת מצווה של אם</div>
        <div class="ln">ובת ביוני /יולי, היא רוצה</div>
        <div class="ln">שמש ים ובריכה+ קניות</div>
        <div class="ln">וכיף.., חשבתי על רודוס או</div>
        <div class="ln">כרתים</div>
        <div class="ln ln-dots">...</div>
        <div class="ln-link" dir="ltr"><svg class="emo" viewBox="0 0 74 74" fill="none"><g stroke="#8e8a85" stroke-width="8"><ellipse cx="51" cy="22" rx="13" ry="22" transform="rotate(42 51 22)"/><ellipse cx="25" cy="51" rx="17" ry="23" transform="rotate(42 25 51)"/></g><g stroke="#dedbd7" stroke-width="5"><ellipse cx="51" cy="22" rx="13" ry="22" transform="rotate(42 51 22)"/><ellipse cx="25" cy="51" rx="17" ry="23" transform="rotate(42 25 51)"/></g></svg> <a href="https://tinyurl.com/29d3tavk">https://tinyurl.com<br>/29d3tavk</a></div>
      </div>
      <div class="msg-meta d-flex align-items-center"><svg width="48" height="32" viewBox="0 0 48 32" fill="none" stroke="currentColor" stroke-width="4"><path d="M2 18l10 11L31 2M21 25l4 4L46 2"/></svg><span>18:25</span></div>
    </article>
    <button class="fwd d-flex align-items-center justify-content-center" aria-label="העברה"><svg width="62" height="46" viewBox="0 0 62 46" fill="none" stroke="#fff" stroke-width="6" stroke-linecap="round" stroke-linejoin="round"><path d="M4 41v-5q0-15 16-15h20M28 6l15 15-15 15M43 6l15 15-15 15"/></svg></button>
  </div>

  <form class="composer position-relative d-flex align-items-center" dir="rtl">
    <div class="pill d-flex align-items-center flex-fill">
      <button type="button" class="icon-btn" aria-label="מדבקות"><svg width="60" height="60" viewBox="0 0 60 60" fill="none" stroke="currentColor" stroke-width="6" stroke-linejoin="round"><path d="M18 3h24q15 0 15 15v18L37 57H18Q3 57 3 42V18Q3 3 18 3z"/><path d="M34 55V43q0-9 9-9h14"/><path d="M17 34h20q-3 9-10 9t-10-9z" fill="currentColor" stroke-width="3"/><circle cx="20" cy="21" r="4.500" fill="currentColor" stroke="none"/><circle cx="41" cy="21" r="4.500" fill="currentColor" stroke="none"/></svg></button>
      <div class="field position-relative d-flex flex-fill">
        <input class="msg-input w-100" type="text" placeholder="הודעה" aria-label="הודעה">
        <span class="caret position-absolute"></span>
      </div>
      <div class="pill-tools d-flex align-items-center">
        <button type="button" class="icon-btn" aria-label="צירוף"><svg width="40" height="60" viewBox="0 0 40 60" fill="none" stroke="currentColor" stroke-width="5" stroke-linecap="round"><path d="M36 15v26q0 16-16 16T4 41V14Q4 3 14 3t12 11v27q0 6-6 6t-6-6V15"/></svg></button>
        <button type="button" class="icon-btn" aria-label="מצלמה"><svg width="60" height="56" viewBox="0 0 60 56" fill="none" stroke="currentColor" stroke-width="6" stroke-linejoin="round"><path d="M3 10h13l6-7h16l6 7h13v43H3z"/><circle cx="30" cy="31" r="11"/></svg></button>
      </div>
    </div>
    <button type="button" class="mic d-flex flex-shrink-0 align-items-center justify-content-center" aria-label="הקלטה"><svg width="42" height="58" viewBox="0 0 42 58"><rect x="12" y="0" width="18" height="36" rx="9" fill="#0b0f14"/><path d="M3 29q2 16 18 16t18-16M21 45v11" fill="none" stroke="#0b0f14" stroke-width="5" stroke-linecap="round"/></svg></button>
  </form>
</main>

<nav class="nav-keys d-flex align-items-center justify-content-center">
  <button class="icon-btn d-flex justify-content-center" aria-label="יישומים אחרונים"><svg width="44" height="50" viewBox="0 0 44 50" stroke="currentColor" stroke-width="4" stroke-linecap="round"><path d="M3 3v44M22 3v44M41 3v44"/></svg></button>
  <button class="icon-btn d-flex justify-content-center" aria-label="בית"><svg width="50" height="50" viewBox="0 0 50 50" fill="none" stroke="currentColor" stroke-width="4"><rect x="3" y="3" width="44" height="44" rx="15"/></svg></button>
  <button class="icon-btn d-flex justify-content-center" aria-label="הקודם"><svg width="34" height="50" viewBox="0 0 34 50" fill="none" stroke="currentColor" stroke-width="4" stroke-linecap="round"><path d="M4 3l26 22L4 47"/></svg></button>
</nav>
</div>
</body>
</html>
